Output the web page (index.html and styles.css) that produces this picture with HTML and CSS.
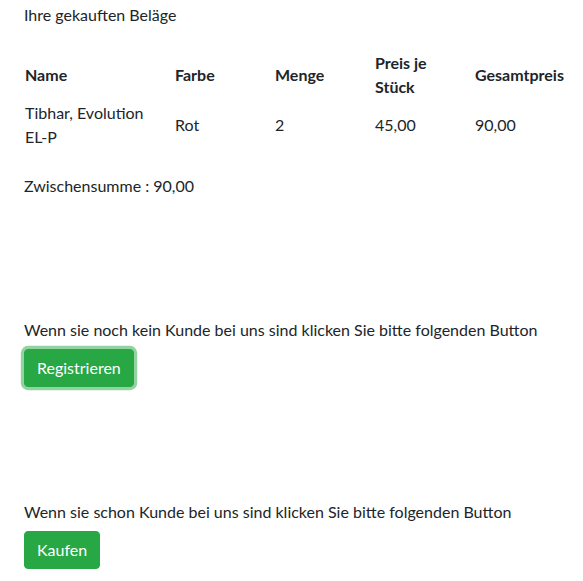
FILE: index.html
```html
<!DOCTYPE html>
<html lang="de">
<head>
<meta charset="utf-8">
<title>Warenkorb</title>
<link rel="stylesheet" href="styles.css">
</head>
<body>
<main class="page">
  <p class="title">Ihre gekauften Beläge</p>
  <table class="cart">
    <colgroup>
      <col class="c-name"><col class="c-std"><col class="c-std"><col class="c-std"><col class="c-std">
    </colgroup>
    <thead>
      <tr>
        <th>Name</th>
        <th>Farbe</th>
        <th>Menge</th>
        <th>Preis je Stück</th>
        <th>Gesamtpreis</th>
      </tr>
    </thead>
    <tbody>
      <tr>
        <td>Tibhar, Evolution EL&#8209;P</td>
        <td>Rot</td>
        <td>2</td>
        <td>45,00</td>
        <td>90,00</td>
      </tr>
    </tbody>
  </table>
  <p class="subtotal">Zwischensumme : 90,00</p>
  <section class="action action-register">
    <p class="hint">Wenn sie noch kein Kunde bei uns sind klicken Sie bitte folgenden Button</p>
    <button class="btn btn-focus" type="button">Registrieren</button>
  </section>
  <section class="action action-buy">
    <p class="hint">Wenn sie schon Kunde bei uns sind klicken Sie bitte folgenden Button</p>
    <button class="btn" type="button">Kaufen</button>
  </section>
</main>
</body>
</html>
```
FILE: styles.css
```css
html, body {
  margin: 0;
  padding: 0;
  background: #fff;
}
body {
  font-family: "Lato", "Liberation Sans", sans-serif;
  font-size: 16px;
  line-height: 24px;
  color: #212529;
}
.page {
  padding: 3px 24px 0 24px;
  display: flex;
  flex-direction: column;
  align-items: flex-start;
}
p {
  margin: 0;
}
.title {
  margin-bottom: 23px;
}
.cart {
  border-collapse: collapse;
  table-layout: fixed;
  width: 550px;
  flex-shrink: 0;
}
.c-name { width: 150px; }
.c-std { width: 100px; }
.cart th,
.cart td {
  padding: 1px 8px 1px 1px;
  text-align: left;
  vertical-align: middle;
}
.cart th:first-child,
.cart td:first-child {
  padding-right: 12px;
}
.cart th {
  font-weight: 700;
}
.subtotal {
  margin-top: 24px;
}
.action {
  display: flex;
  flex-direction: column;
  align-items: flex-start;
  gap: 7px;
}
.action-register {
  margin-top: 120px;
}
.action-buy {
  margin-top: 113px;
}
.btn {
  font-family: inherit;
  font-size: 16px;
  line-height: 24px;
  color: #fff;
  background: #28a745;
  border: 1px solid #28a745;
  border-radius: 4px;
  padding: 6px 12px;
  margin: 0;
}
.btn-focus {
  box-shadow: 0 0 0 3.2px rgba(40, 167, 69, 0.5);
}
```
